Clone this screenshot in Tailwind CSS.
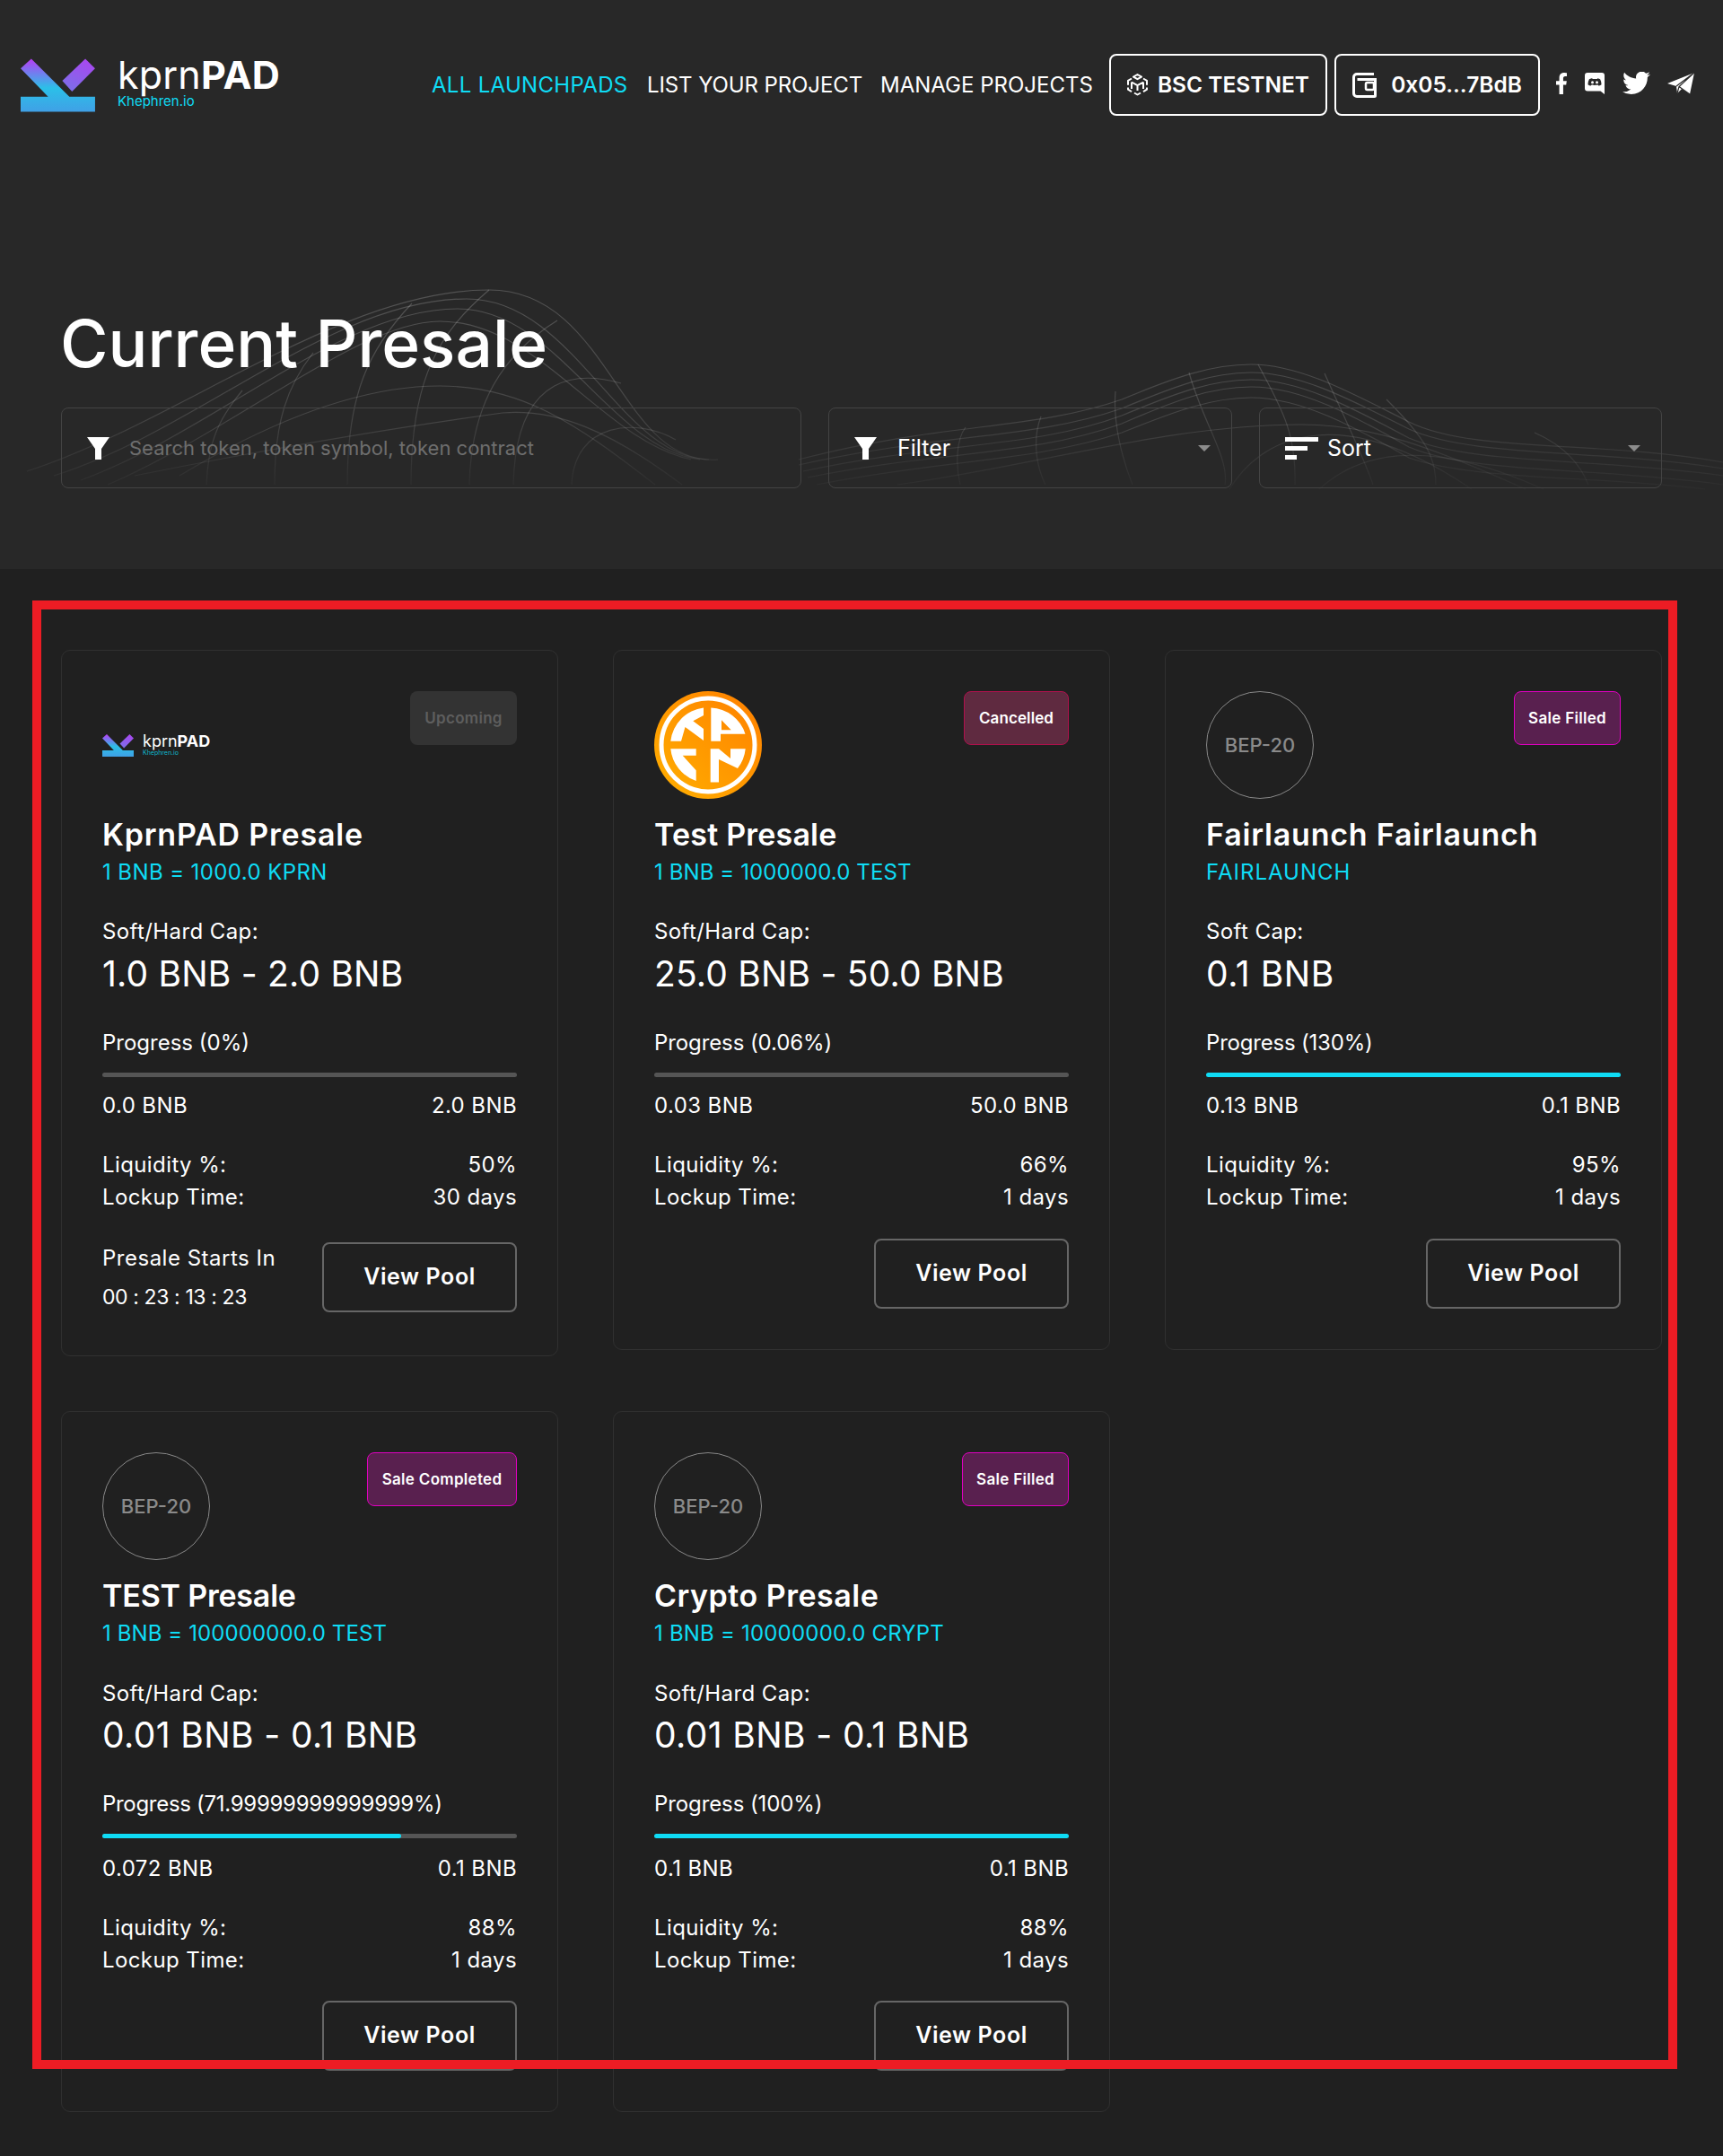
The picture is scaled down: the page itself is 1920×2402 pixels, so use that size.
<!DOCTYPE html>
<html lang="en">
  <head>
    <meta charset="UTF-8" />
    <meta name="viewport" content="width=device-width, initial-scale=1.0" />
    <title>Current Presale</title>
    <script src="https://cdn.jsdelivr.net/npm/@tailwindcss/browser@4"></script>
  </head>
  <body class="relative h-[2402px] overflow-hidden bg-[#202020] font-['Inter',sans-serif] text-white">
    <svg class="absolute h-0 w-0">
      <defs>
        <linearGradient id="logo-grad" x1="0" y1="0" x2="0" y2="1">
          <stop offset="0" stop-color="#b83cf5" />
          <stop offset="0.55" stop-color="#2bc0e8" />
          <stop offset="1" stop-color="#40a0e6" />
        </linearGradient>
        <linearGradient id="logo-grad-2" gradientUnits="userSpaceOnUse" x1="96" y1="62" x2="78" y2="100">
          <stop offset="0" stop-color="#a848f0" />
          <stop offset="1" stop-color="#7a70e8" />
        </linearGradient>
        <linearGradient id="coin-grad" x1="1" y1="0" x2="0" y2="1">
          <stop offset="0" stop-color="#ff7f00" />
          <stop offset="1" stop-color="#ffb000" />
        </linearGradient>
        <linearGradient id="wave-fade" gradientUnits="userSpaceOnUse" x1="0" y1="320" x2="0" y2="545">
          <stop offset="0" stop-color="#fff" stop-opacity="0.2" />
          <stop offset="0.65" stop-color="#fff" stop-opacity="0.13" />
          <stop offset="1" stop-color="#fff" stop-opacity="0.02" />
        </linearGradient>
        <g id="logo-mark">
          <path fill="url(#logo-grad)" d="M35 62 23 73 54 105H23v17h84v-17H78z" />
          <path fill="url(#logo-grad-2)" d="M96 62 107 73 81 99 70 87z" />
        </g>
      </defs>
    </svg>

    <section class="relative h-[634px] bg-[#282828]">
      <!-- wave lines behind the hero -->
      <svg class="absolute inset-0 h-[634px] w-[1920px]" viewBox="0 0 1920 634" fill="none" stroke="url(#wave-fade)" stroke-width="1.2">
        <path d="M30 525C200 470 380 323 545 323 680 323 690 520 800 512" />
        <path d="M60 530C220 480 370 333 520 333 640 333 690 510 790 512" />
        <path d="M90 535C240 480 380 344 510 344 620 344 680 500 780 512" />
        <path d="M120 540C260 480 400 358 490 358 600 358 670 490 770 512" />
        <path d="M200 530C300 470 400 430 490 430 580 430 640 470 730 540" />
        <path d="M150 530C300 500 450 475 560 460 620 455 680 480 760 540" />
        <path d="M545 323C490 370 458 420 458 540" />
        <path d="M459 338C410 390 387 440 387 540" />
        <path d="M349 393C320 430 306 470 306 540" />
        <path d="M270 435C245 465 232 490 230 540" />
        <path d="M621 357C560 395 525 450 523 540" />
        <path d="M692 427C650 415 575 410 572 540" />
        <path d="M753 490C710 465 640 470 637 540" />
        <path d="M890 512C1050 470 1150 480 1250 445 1310 420 1350 406 1394 406 1450 406 1510 440 1570 470 1640 505 1780 490 1920 515" />
        <path d="M890 518C1050 482 1150 490 1250 455 1310 430 1350 415 1394 415 1450 415 1510 448 1570 478 1640 510 1780 500 1920 522" />
        <path d="M895 525C1050 492 1150 500 1250 463 1310 438 1350 423 1394 423 1450 423 1510 456 1570 488 1640 518 1780 510 1920 530" />
        <path d="M900 532C1050 502 1150 508 1250 472 1310 446 1350 431 1394 431 1450 431 1510 464 1570 498 1640 528 1780 520 1920 540" />
        <path d="M910 540C1050 512 1150 515 1250 482 1310 458 1350 443 1394 443 1450 443 1510 476 1570 510 1640 535 1780 530 1900 545" />
        <path d="M1000 540C1150 520 1300 473 1450 473 1530 473 1600 500 1700 545" />
        <path d="M1402 406C1425 450 1445 480 1443 540" />
        <path d="M1325 415C1340 470 1370 510 1365 540" />
        <path d="M1243 436C1240 470 1250 510 1262 540" />
        <path d="M1160 464C1150 490 1155 520 1165 540" />
        <path d="M1076 476C1065 490 1065 520 1070 540" />
        <path d="M1476 416C1500 470 1520 510 1530 540" />
        <path d="M1545 445C1590 490 1600 510 1600 540" />
        <path d="M1710 482C1740 495 1760 515 1770 540" />
        <path d="M1370 545C1410 480 1500 450 1640 545" />
        <path d="M1470 545C1530 490 1620 500 1720 545" />
      </svg>

      <div class="relative">
        <header class="flex items-center pl-[23px] pt-[60px]">
          <a class="flex h-[69px] w-[289px] items-center gap-[25px]">
            <svg class="h-[60px] w-[84px]" viewBox="23 62 84 60"><use href="#logo-mark" /></svg>
            <div class="-mt-[8px] flex flex-col">
              <span class="text-[43px] leading-[44px] tracking-[0.2px]">kprn<b class="font-bold">PAD</b></span>
              <span class="text-[15px] leading-[16px] text-[#0fdcf5]">Khephren.io</span>
            </div>
          </a>
          <nav class="ml-[169px] flex items-center pt-[1px] text-[24px]">
            <a class="w-[240px] tracking-[0.3px] text-[#0fdcf5]">ALL LAUNCHPADS</a>
            <a class="w-[260px] tracking-[-0.1px]">LIST YOUR PROJECT</a>
            <a class="w-[255px]">MANAGE PROJECTS</a>
          </nav>
          <button class="flex h-[69px] w-[243px] items-center justify-center gap-[11px] rounded-[8px] border-2 border-white text-[24.5px] font-semibold">
            <svg class="h-[25px] w-[23px]" viewBox="0 0 23 25" fill="none" stroke="#fff" stroke-width="2" stroke-linejoin="round">
              <path d="M11.5 1 16 3.6 11.5 6.2 7 3.6z" />
              <path d="M5 5.5 1 7.8v4.9M18 5.5l4 2.3v4.9M1 15.5v2.2l4 2.4M22 15.5v2.2l-4 2.4" />
              <path d="M5 9.5 11.5 13.2 18 9.5M11.5 13.2V19M5 9.5V17M18 9.5V17M8 21.5l3.5 2 3.5-2" />
            </svg>
            BSC TESTNET
          </button>
          <button class="ml-[8px] flex h-[69px] w-[229px] items-center justify-center gap-[14px] rounded-[8px] border-2 border-white text-[24.5px] font-semibold">
            <svg class="h-[28px] w-[29px]" viewBox="0 0 29 28" fill="none" stroke="#fff" stroke-width="3">
              <path d="M24 1.5H5A3.5 3.5 0 0 0 1.5 5v18A3.5 3.5 0 0 0 5 26.500h19.500a1 1 0 0 0 1-1V7.500h-20" />
              <rect x="15" y="11" width="9" height="8" rx="1.500" stroke-width="2.500" />
            </svg>
            0x05...7BdB
          </button>
          <div class="-mt-[3px] ml-[17px] flex items-center">
            <svg class="h-[24px] w-[14px]" viewBox="0 0 320 512" preserveAspectRatio="none" fill="#fff"><path d="M279.14 288l14.22-92.66h-88.91v-60.13c0-25.35 12.42-50.06 52.24-50.06h40.42V6.26S260.43 0 225.36 0c-73.22 0-121.08 44.38-121.08 124.72v70.62H22.89V288h81.39v224h100.17V288z" /></svg>
            <svg class="ml-[19px] h-[24px] w-[22px]" viewBox="0 0 22 24">
              <path fill="#fff" d="M3 0h16a3 3 0 0 1 3 3v21l-4.500-3.500H3a3 3 0 0 1-3-3V3a3 3 0 0 1 3-3z" />
              <path fill="#282828" d="M7.800 6.200c-1.300.2-2.300.6-2.900 1-1 1.900-1.500 3.900-1.400 6 1 .8 2.200 1.300 3.200 1.400l.7-1.100c1.200.5 5 .5 7.200 0l.7 1.100c1-.1 2.200-.6 3.200-1.400.1-2.100-.4-4.100-1.400-6-.6-.4-1.600-.8-2.900-1l-.4.9c-1.400-.2-3.300-.2-4.700 0z" />
              <circle cx="8.500" cy="10.800" r="1.500" fill="#fff" />
              <circle cx="13.500" cy="10.800" r="1.500" fill="#fff" />
            </svg>
            <svg class="ml-[20px] h-[26px] w-[31px]" viewBox="0 0 24 20" preserveAspectRatio="none" fill="#fff"><path transform="translate(0 -2.500)" d="M23.953 4.570a10 10 0 0 1-2.825.775 4.958 4.958 0 0 0 2.163-2.723c-.951.555-2.005.959-3.127 1.184a4.920 4.920 0 0 0-8.384 4.482C7.690 8.095 4.067 6.130 1.640 3.162a4.822 4.822 0 0 0-.666 2.475c0 1.710.870 3.213 2.188 4.096a4.904 4.904 0 0 1-2.228-.616v.060a4.923 4.923 0 0 0 3.946 4.827 4.996 4.996 0 0 1-2.212.085 4.936 4.936 0 0 0 4.604 3.417 9.867 9.867 0 0 1-6.102 2.105c-.390 0-.779-.023-1.170-.067a13.995 13.995 0 0 0 7.557 2.209c9.053 0 13.998-7.496 13.998-13.985 0-.210 0-.420-.015-.630A9.935 9.935 0 0 0 24 4.590z" /></svg>
            <svg class="ml-[19px] h-[24px] w-[30px]" viewBox="0 0 30 24">
              <path fill="#fff" d="M30 0 25 24 16 18 11 23 10 15 0 12z" />
              <path fill="none" stroke="#282828" stroke-width="1.200" d="M30 0 10 15M30 0 13 15.500 11 23M13 15.500 25 24" />
            </svg>
          </div>
        </header>

        <h1 class="ml-[67px] mt-[209px] text-[73px] font-medium leading-[90px]">Current Presale</h1>

        <div class="mx-[68px] mt-[26px] flex gap-[30px]">
          <label class="flex h-[90px] w-[825px] items-center rounded-[8px] border border-[#444] pl-[28px]">
            <svg class="h-[25px] w-[25px]" viewBox="0 0 25 25" fill="#fff"><path d="M0 0h25L16 13v12h-7V13z" /></svg>
            <input type="text" placeholder="Search token, token symbol, token contract" class="ml-[22px] flex-1 bg-transparent text-[22px] outline-none placeholder:text-[#6e6e6e]" />
          </label>
          <div class="flex h-[90px] w-[450px] items-center rounded-[8px] border border-[#444] pl-[28px] pr-[23px]">
            <svg class="h-[25px] w-[25px]" viewBox="0 0 25 25" fill="#fff"><path d="M0 0h25L16 13v12h-7V13z" /></svg>
            <span class="ml-[23px] flex-1 pt-[2px] text-[25px]">Filter</span>
            <svg class="h-[7px] w-[14px]" viewBox="0 0 14 7" fill="#8c8c8c"><path d="M0 0h14L7 7z" /></svg>
          </div>
          <div class="flex h-[90px] w-[449px] items-center rounded-[8px] border border-[#444] pl-[28px] pr-[23px]">
            <svg class="h-[25px] w-[37px]" viewBox="0 0 37 25" fill="#fff"><path d="M0 0h37v5H0zM0 10h25v5H0zM0 20h13v5H0z" /></svg>
            <span class="ml-[10px] flex-1 pt-[2px] text-[25px]">Sort</span>
            <svg class="h-[7px] w-[14px]" viewBox="0 0 14 7" fill="#8c8c8c"><path d="M0 0h14L7 7z" /></svg>
          </div>
        </div>
      </div>
    </section>

    <main class="grid grid-cols-[repeat(3,554px)] items-start gap-x-[61px] gap-y-[61px] px-[68px] pt-[90px]">
      <!-- KprnPAD -->
      <article class="rounded-[10px] border border-[#303030] p-[45px] pb-[48px]">
        <div class="flex h-[120px] items-start justify-between">
          <div class="flex h-[120px] items-center gap-[10px]">
            <svg class="h-[25px] w-[35px]" viewBox="23 62 84 60"><use href="#logo-mark" /></svg>
            <div class="flex flex-col">
              <span class="text-[18px] leading-[18px]">kprn<b class="font-bold">PAD</b></span>
              <span class="text-[7px] leading-[8px] text-[#0fb8cc]">Khephren.io</span>
            </div>
          </div>
          <span class="flex h-[60px] w-[119px] items-center justify-center rounded-[8px] bg-[#333] pt-[2px] text-[17px] font-semibold tracking-[0.3px] text-[#5e5e5e]">Upcoming</span>
        </div>
        <h2 class="mt-[20px] text-[34px] font-semibold leading-[40px] tracking-[0.8px]">KprnPAD Presale</h2>
        <p class="mt-[7px] text-[24px] leading-[30px] tracking-[0.4px] text-[#0fdcf5]">1 BNB = 1000.0 KPRN</p>
        <p class="mt-[36px] text-[24px] leading-[30px] tracking-[0.4px]">Soft/Hard Cap:</p>
        <p class="mt-[8px] text-[39px] leading-[48px] tracking-[0.2px]">1.0 BNB - 2.0 BNB</p>
        <p class="mt-[38px] text-[24px] leading-[30px]">Progress (0%)</p>
        <div class="mt-[18px] h-[5px] rounded-full bg-[#555]"></div>
        <div class="mt-[17px] flex justify-between text-[24px] leading-[30px] tracking-[0.4px]"><span>0.0 BNB</span><span>2.0 BNB</span></div>
        <div class="mt-[36px] flex justify-between text-[24px] leading-[30px] tracking-[0.4px]"><span>Liquidity %:</span><span>50%</span></div>
        <div class="mt-[6px] flex justify-between text-[24px] leading-[30px] tracking-[0.4px]"><span>Lockup Time:</span><span>30 days</span></div>
        <div class="mt-[35px] flex items-center justify-between">
          <div class="leading-[30px]">
            <p class="text-[24px] tracking-[0.5px]">Presale Starts In</p>
            <p class="mt-[13px] text-[23px] tracking-[-0.4px]">00 : 23 : 13 : 23</p>
          </div>
          <a class="flex h-[78px] w-[217px] items-center justify-center rounded-[8px] border-2 border-[#666] text-[25px] font-semibold tracking-[0.6px]">View Pool</a>
        </div>
      </article>

      <!-- Test -->
      <article class="rounded-[10px] border border-[#303030] p-[45px]">
        <div class="flex h-[120px] items-start justify-between">
          <svg class="h-[120px] w-[120px]" viewBox="0 0 120 120">
            <circle cx="60" cy="60" r="60" fill="url(#coin-grad)" />
            <circle cx="60" cy="60" r="52" fill="none" stroke="#fff" stroke-width="5" />
            <path fill="#fff" fill-rule="evenodd" d="M18.300 55.700A42 42 0 0 1 55 18.500V27L43.300 33.300 55 42V55L34.500 40 30 55.700Z" />
            <path fill="#fff" fill-rule="evenodd" d="M63.300 18.500A42 42 0 0 1 101.500 47.700H74V55.700H63.300ZM75 32.300 85.700 43.300H75Z" />
            <path fill="#fff" d="M18.300 64.300H46.700V71.700H31.700L46.700 88.300V100A42 42 0 0 1 18.300 64.300Z" />
            <path fill="#fff" d="M62.700 64.300H72L85 75V64.300H101.700A42 42 0 0 1 93 86L72 76V101.500L62.700 101.500Z" />
          </svg>
          <span class="flex h-[60px] w-[117px] items-center justify-center rounded-[8px] border border-[#b0104c] bg-[#5f2a40] pt-[2px] text-[17px] font-semibold tracking-[0.1px]">Cancelled</span>
        </div>
        <h2 class="mt-[20px] text-[34px] font-semibold leading-[40px] tracking-[0.2px]">Test Presale</h2>
        <p class="mt-[7px] text-[24px] leading-[30px] tracking-[0.1px] text-[#0fdcf5]">1 BNB = 1000000.0 TEST</p>
        <p class="mt-[36px] text-[24px] leading-[30px] tracking-[0.4px]">Soft/Hard Cap:</p>
        <p class="mt-[8px] text-[39px] leading-[48px] tracking-[0.2px]">25.0 BNB - 50.0 BNB</p>
        <p class="mt-[38px] text-[24px] leading-[30px] tracking-[-0.1px]">Progress (0.06%)</p>
        <div class="mt-[18px] h-[5px] rounded-full bg-[#555]"></div>
        <div class="mt-[17px] flex justify-between text-[24px] leading-[30px] tracking-[0.4px]"><span>0.03 BNB</span><span>50.0 BNB</span></div>
        <div class="mt-[36px] flex justify-between text-[24px] leading-[30px] tracking-[0.4px]"><span>Liquidity %:</span><span>66%</span></div>
        <div class="mt-[6px] flex justify-between text-[24px] leading-[30px] tracking-[0.4px]"><span>Lockup Time:</span><span>1 days</span></div>
        <div class="mt-[31px] flex justify-end">
          <a class="flex h-[78px] w-[217px] items-center justify-center rounded-[8px] border-2 border-[#666] text-[25px] font-semibold tracking-[0.6px]">View Pool</a>
        </div>
      </article>

      <!-- Fairlaunch -->
      <article class="rounded-[10px] border border-[#303030] p-[45px]">
        <div class="flex h-[120px] items-start justify-between">
          <div class="flex h-[120px] w-[120px] items-center justify-center rounded-full border border-[#888] text-[22px] font-medium text-[#8a8a8a]">BEP-20</div>
          <span class="flex h-[60px] w-[119px] items-center justify-center rounded-[8px] border border-[#e000c0] bg-[#59204f] pt-[2px] text-[17px] font-semibold tracking-[0.3px]">Sale Filled</span>
        </div>
        <h2 class="mt-[20px] text-[34px] font-semibold leading-[40px] tracking-[0.8px]">Fairlaunch Fairlaunch</h2>
        <p class="mt-[7px] text-[24px] leading-[30px] tracking-[1px] text-[#0fdcf5]">FAIRLAUNCH</p>
        <p class="mt-[36px] text-[24px] leading-[30px] tracking-[0.4px]">Soft Cap:</p>
        <p class="mt-[8px] text-[39px] leading-[48px] tracking-[0.6px]">0.1 BNB</p>
        <p class="mt-[38px] text-[24px] leading-[30px] tracking-[-0.2px]">Progress (130%)</p>
        <div class="mt-[18px] h-[5px] rounded-full bg-[#0fdcf5]"></div>
        <div class="mt-[17px] flex justify-between text-[24px] leading-[30px] tracking-[0.4px]"><span>0.13 BNB</span><span>0.1 BNB</span></div>
        <div class="mt-[36px] flex justify-between text-[24px] leading-[30px] tracking-[0.4px]"><span>Liquidity %:</span><span>95%</span></div>
        <div class="mt-[6px] flex justify-between text-[24px] leading-[30px] tracking-[0.4px]"><span>Lockup Time:</span><span>1 days</span></div>
        <div class="mt-[31px] flex justify-end">
          <a class="flex h-[78px] w-[217px] items-center justify-center rounded-[8px] border-2 border-[#666] text-[25px] font-semibold tracking-[0.6px]">View Pool</a>
        </div>
      </article>

      <!-- TEST -->
      <article class="rounded-[10px] border border-[#303030] p-[45px]">
        <div class="flex h-[120px] items-start justify-between">
          <div class="flex h-[120px] w-[120px] items-center justify-center rounded-full border border-[#888] text-[22px] font-medium text-[#8a8a8a]">BEP-20</div>
          <span class="flex h-[60px] w-[167px] items-center justify-center rounded-[8px] border border-[#e000c0] bg-[#59204f] pt-[2px] text-[17px] font-semibold tracking-[0.3px]">Sale Completed</span>
        </div>
        <h2 class="mt-[20px] text-[34px] font-semibold leading-[40px] tracking-[-0.2px]">TEST Presale</h2>
        <p class="mt-[7px] text-[24px] leading-[30px] tracking-[0.1px] text-[#0fdcf5]">1 BNB = 100000000.0 TEST</p>
        <p class="mt-[37px] text-[24px] leading-[30px] tracking-[0.4px]">Soft/Hard Cap:</p>
        <p class="mt-[7px] text-[39px] leading-[48px] tracking-[0.4px]">0.01 BNB - 0.1 BNB</p>
        <p class="mt-[38px] text-[24px] leading-[30px] tracking-[-0.3px]">Progress (71.99999999999999%)</p>
        <div class="mt-[18px] h-[5px] rounded-full bg-[#555]"><div class="h-[5px] w-[72%] rounded-full bg-[#0fdcf5]"></div></div>
        <div class="mt-[19px] flex justify-between text-[24px] leading-[30px] tracking-[0.4px]"><span>0.072 BNB</span><span>0.1 BNB</span></div>
        <div class="mt-[36px] flex justify-between text-[24px] leading-[30px] tracking-[0.4px]"><span>Liquidity %:</span><span>88%</span></div>
        <div class="mt-[6px] flex justify-between text-[24px] leading-[30px] tracking-[0.4px]"><span>Lockup Time:</span><span>1 days</span></div>
        <div class="mt-[30px] flex justify-end">
          <a class="flex h-[78px] w-[217px] items-center justify-center rounded-[8px] border-2 border-[#666] text-[25px] font-semibold tracking-[0.6px]">View Pool</a>
        </div>
      </article>

      <!-- Crypto -->
      <article class="rounded-[10px] border border-[#303030] p-[45px]">
        <div class="flex h-[120px] items-start justify-between">
          <div class="flex h-[120px] w-[120px] items-center justify-center rounded-full border border-[#888] text-[22px] font-medium text-[#8a8a8a]">BEP-20</div>
          <span class="flex h-[60px] w-[119px] items-center justify-center rounded-[8px] border border-[#e000c0] bg-[#59204f] pt-[2px] text-[17px] font-semibold tracking-[0.3px]">Sale Filled</span>
        </div>
        <h2 class="mt-[20px] text-[34px] font-semibold leading-[40px] tracking-[0.5px]">Crypto Presale</h2>
        <p class="mt-[7px] text-[24px] leading-[30px] tracking-[0.2px] text-[#0fdcf5]">1 BNB = 10000000.0 CRYPT</p>
        <p class="mt-[37px] text-[24px] leading-[30px] tracking-[0.4px]">Soft/Hard Cap:</p>
        <p class="mt-[7px] text-[39px] leading-[48px] tracking-[0.4px]">0.01 BNB - 0.1 BNB</p>
        <p class="mt-[38px] text-[24px] leading-[30px] tracking-[-0.1px]">Progress (100%)</p>
        <div class="mt-[18px] h-[5px] rounded-full bg-[#0fdcf5]"></div>
        <div class="mt-[19px] flex justify-between text-[24px] leading-[30px] tracking-[0.4px]"><span>0.1 BNB</span><span>0.1 BNB</span></div>
        <div class="mt-[36px] flex justify-between text-[24px] leading-[30px] tracking-[0.4px]"><span>Liquidity %:</span><span>88%</span></div>
        <div class="mt-[6px] flex justify-between text-[24px] leading-[30px] tracking-[0.4px]"><span>Lockup Time:</span><span>1 days</span></div>
        <div class="mt-[30px] flex justify-end">
          <a class="flex h-[78px] w-[217px] items-center justify-center rounded-[8px] border-2 border-[#666] text-[25px] font-semibold tracking-[0.6px]">View Pool</a>
        </div>
      </article>
    </main>

    <!-- red marker drawn over the page -->
    <div class="pointer-events-none absolute left-[36px] top-[669px] h-[1636px] w-[1833px] border-[10px] border-[#ed1c24]"></div>
  </body>
</html>
